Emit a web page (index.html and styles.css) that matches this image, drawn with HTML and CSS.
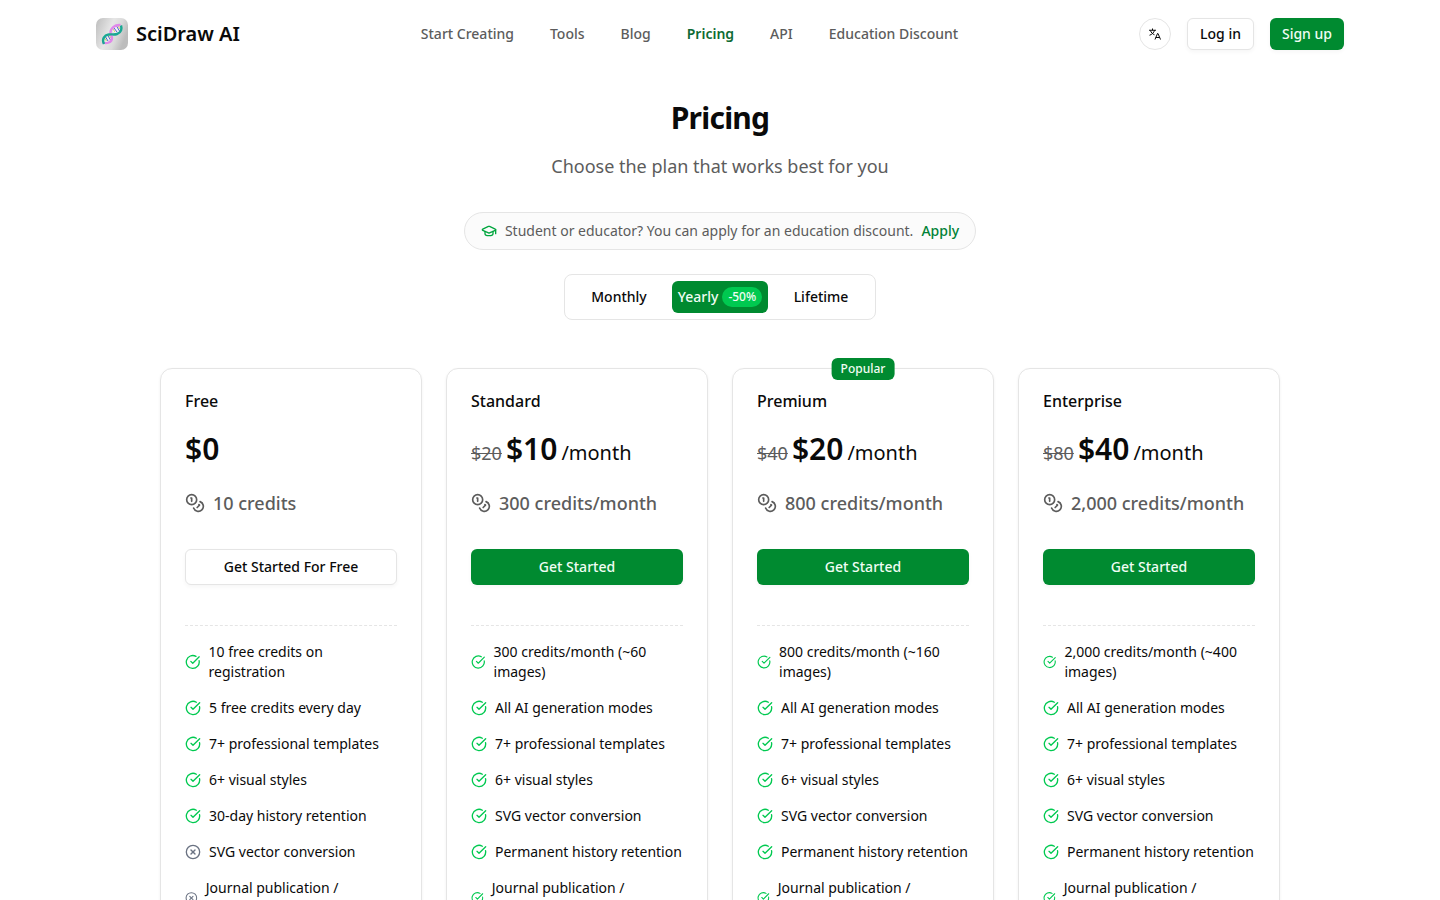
FILE: index.html
```html
<!DOCTYPE html>
<html lang="en">
<head>
  <meta charset="UTF-8" />
  <meta name="viewport" content="width=device-width, initial-scale=1.0"/>
  <title>Pricing - SciDraw AI</title>
  <link rel="stylesheet" href="styles.css">
</head>
<body>
  <!-- shared icons -->
  <svg class="sprite" aria-hidden="true">
    <symbol id="icon-check" viewBox="0 0 24 24">
      <path d="M21.801 10A10 10 0 1 1 17 3.335"/>
      <path d="m9 11 3 3L22 4"/>
    </symbol>
    <symbol id="icon-x" viewBox="0 0 24 24">
      <circle cx="12" cy="12" r="10"/>
      <path d="m15 9-6 6"/>
      <path d="m9 9 6 6"/>
    </symbol>
    <symbol id="icon-coins" viewBox="0 0 24 24">
      <circle cx="8" cy="8" r="6"/>
      <path d="M18.09 10.37A6 6 0 1 1 10.34 18"/>
      <path d="M7 6h1v4"/>
      <path d="m16.71 13.88.7.71-2.82 2.82"/>
    </symbol>
    <symbol id="icon-cap" viewBox="0 0 24 24">
      <path d="M21.42 10.922a1 1 0 0 0-.019-1.838L12.83 5.18a2 2 0 0 0-1.66 0L2.6 9.08a1 1 0 0 0 0 1.832l8.57 3.908a2 2 0 0 0 1.66 0z"/>
      <path d="M22 10v6"/>
      <path d="M6 12.5V16a6 3 0 0 0 12 0v-3.5"/>
    </symbol>
  </svg>

  <header class="header">
    <a href="#" class="logo">
      <svg class="logo-icon" viewBox="0 0 32 32" fill="none" aria-hidden="true">
        <defs>
          <linearGradient id="logo-bg" x1="0" y1="0" x2="1" y2="0.4">
            <stop offset="0" stop-color="#bdbdbd"/>
            <stop offset="0.5" stop-color="#e6e6e6"/>
            <stop offset="0.75" stop-color="#dadada"/>
            <stop offset="1" stop-color="#bcbcbc"/>
          </linearGradient>
        </defs>
        <rect width="32" height="32" rx="7" fill="url(#logo-bg)"/>
        <ellipse cx="11.5" cy="20" rx="4" ry="3.5" fill="#eef3ee"/>
        <ellipse cx="20.5" cy="11.5" rx="4" ry="3.5" fill="#f4f0fa"/>
        <path d="M9 18l3 5M11.500 17l3 5M18 10l3 4M20.500 8l3 5" stroke="#4a62cf"/>
        <path d="M8.500 20l2 3M13 17l2 3M17 11l2 3M22 8l2 3" stroke="#cfd65a"/>
        <path d="M6.500 24.500c4 1.500 9.500 0 9.500-4.500 0-2-1.500-3-1.500-5.500 0-4 4-8 10-7.500" stroke="#e088ea" stroke-width="2.400"/>
        <path d="M8 26c-2.500-5 .5-9 4.500-9.500 3-.500 5.500.500 8.500-.500 4.500-1.500 5-5.500 4-8.500" stroke="#1aa893" stroke-width="2.400"/>
      </svg>
      <span>SciDraw AI</span>
    </a>
    <nav class="nav">
      <a href="#">Start Creating</a>
      <a href="#">Tools</a>
      <a href="#">Blog</a>
      <a href="#" class="active">Pricing</a>
      <a href="#">API</a>
      <a href="#">Education Discount</a>
    </nav>
    <div class="header-actions">
      <button type="button" class="lang-btn" aria-label="Language">
        <svg viewBox="0 0 24 24" fill="none" stroke="currentColor" stroke-width="2" aria-hidden="true">
          <path d="M0 4.500h14M7 1v3.500M11 4.500C10 9 6 13 1 14.500M3 5c1 4 4 7 8 8.500"/>
          <path d="M12 23l5-12h1l5 12M13.500 19h8"/>
        </svg>
      </button>
      <button type="button" class="btn btn-outline btn-sm">Log in</button>
      <button type="button" class="btn btn-primary btn-sm">Sign up</button>
    </div>
  </header>

  <main class="main">
    <h1>Pricing</h1>
    <p class="subtitle">Choose the plan that works best for you</p>

    <div class="edu-banner">
      <svg class="icon" aria-hidden="true"><use href="#icon-cap"/></svg>
      <span>Student or educator? You can apply for an education discount.</span>
      <a href="#">Apply</a>
    </div>

    <div class="period" role="group" aria-label="Billing period">
      <button type="button">Monthly</button>
      <button type="button" class="selected">Yearly <span class="discount">-50%</span></button>
      <button type="button">Lifetime</button>
    </div>

    <div class="plans">
      <section class="plan">
        <h2>Free</h2>
        <p class="price"><strong>$0</strong></p>
        <p class="credits"><svg class="icon" aria-hidden="true"><use href="#icon-coins"/></svg>10 credits</p>
        <button type="button" class="btn btn-outline">Get Started For Free</button>
        <ul class="features">
          <li><svg class="icon" aria-hidden="true"><use href="#icon-check"/></svg><span>10 free credits on registration</span></li>
          <li><svg class="icon" aria-hidden="true"><use href="#icon-check"/></svg><span>5 free credits every day</span></li>
          <li><svg class="icon" aria-hidden="true"><use href="#icon-check"/></svg><span>7+ professional templates</span></li>
          <li><svg class="icon" aria-hidden="true"><use href="#icon-check"/></svg><span>6+ visual styles</span></li>
          <li><svg class="icon" aria-hidden="true"><use href="#icon-check"/></svg><span>30-day history retention</span></li>
          <li class="off"><svg class="icon" aria-hidden="true"><use href="#icon-x"/></svg><span>SVG vector conversion</span></li>
          <li class="off"><svg class="icon" aria-hidden="true"><use href="#icon-x"/></svg><span>Journal publication / commercial use</span></li>
        </ul>
      </section>

      <section class="plan">
        <h2>Standard</h2>
        <p class="price"><s>$20</s><strong>$10</strong><span>/month</span></p>
        <p class="credits"><svg class="icon" aria-hidden="true"><use href="#icon-coins"/></svg>300 credits/month</p>
        <button type="button" class="btn btn-primary">Get Started</button>
        <ul class="features">
          <li><svg class="icon" aria-hidden="true"><use href="#icon-check"/></svg><span>300 credits/month (~60 images)</span></li>
          <li><svg class="icon" aria-hidden="true"><use href="#icon-check"/></svg><span>All AI generation modes</span></li>
          <li><svg class="icon" aria-hidden="true"><use href="#icon-check"/></svg><span>7+ professional templates</span></li>
          <li><svg class="icon" aria-hidden="true"><use href="#icon-check"/></svg><span>6+ visual styles</span></li>
          <li><svg class="icon" aria-hidden="true"><use href="#icon-check"/></svg><span>SVG vector conversion</span></li>
          <li><svg class="icon" aria-hidden="true"><use href="#icon-check"/></svg><span>Permanent history retention</span></li>
          <li><svg class="icon" aria-hidden="true"><use href="#icon-check"/></svg><span>Journal publication / commercial use</span></li>
        </ul>
      </section>

      <section class="plan">
        <span class="popular">Popular</span>
        <h2>Premium</h2>
        <p class="price"><s>$40</s><strong>$20</strong><span>/month</span></p>
        <p class="credits"><svg class="icon" aria-hidden="true"><use href="#icon-coins"/></svg>800 credits/month</p>
        <button type="button" class="btn btn-primary">Get Started</button>
        <ul class="features">
          <li><svg class="icon" aria-hidden="true"><use href="#icon-check"/></svg><span>800 credits/month (~160 images)</span></li>
          <li><svg class="icon" aria-hidden="true"><use href="#icon-check"/></svg><span>All AI generation modes</span></li>
          <li><svg class="icon" aria-hidden="true"><use href="#icon-check"/></svg><span>7+ professional templates</span></li>
          <li><svg class="icon" aria-hidden="true"><use href="#icon-check"/></svg><span>6+ visual styles</span></li>
          <li><svg class="icon" aria-hidden="true"><use href="#icon-check"/></svg><span>SVG vector conversion</span></li>
          <li><svg class="icon" aria-hidden="true"><use href="#icon-check"/></svg><span>Permanent history retention</span></li>
          <li><svg class="icon" aria-hidden="true"><use href="#icon-check"/></svg><span>Journal publication / commercial use</span></li>
        </ul>
      </section>

      <section class="plan">
        <h2>Enterprise</h2>
        <p class="price"><s>$80</s><strong>$40</strong><span>/month</span></p>
        <p class="credits"><svg class="icon" aria-hidden="true"><use href="#icon-coins"/></svg>2,000 credits/month</p>
        <button type="button" class="btn btn-primary">Get Started</button>
        <ul class="features">
          <li><svg class="icon" aria-hidden="true"><use href="#icon-check"/></svg><span>2,000 credits/month (~400 images)</span></li>
          <li><svg class="icon" aria-hidden="true"><use href="#icon-check"/></svg><span>All AI generation modes</span></li>
          <li><svg class="icon" aria-hidden="true"><use href="#icon-check"/></svg><span>7+ professional templates</span></li>
          <li><svg class="icon" aria-hidden="true"><use href="#icon-check"/></svg><span>6+ visual styles</span></li>
          <li><svg class="icon" aria-hidden="true"><use href="#icon-check"/></svg><span>SVG vector conversion</span></li>
          <li><svg class="icon" aria-hidden="true"><use href="#icon-check"/></svg><span>Permanent history retention</span></li>
          <li><svg class="icon" aria-hidden="true"><use href="#icon-check"/></svg><span>Journal publication / commercial use</span></li>
        </ul>
      </section>
    </div>
  </main>
</body>
</html>
```
FILE: styles.css
```css
* {
  box-sizing: border-box;
}

body {
  margin: 0;
  font-family: "Noto Sans", sans-serif;
  font-size: 14px;
  line-height: 20px;
  color: #0a0a0a;
  background: #fff;
  -webkit-font-smoothing: antialiased;
}

h1, h2, p, ul {
  margin: 0;
  padding: 0;
}

a {
  color: inherit;
  text-decoration: none;
}

button {
  font: inherit;
  font-weight: 500;
  color: inherit;
  cursor: pointer;
}

.sprite {
  display: none;
}

.icon {
  width: 16px;
  height: 16px;
  fill: none;
  stroke: currentColor;
  stroke-width: 2;
  stroke-linecap: round;
  stroke-linejoin: round;
}

/* header */
.header {
  display: flex;
  align-items: center;
  justify-content: space-between;
  max-width: 1280px;
  margin: 0 auto;
  padding: 18px 16px;
}

.logo {
  display: flex;
  align-items: center;
  gap: 8px;
  font-size: 20px;
  line-height: 28px;
  font-weight: 600;
}

.logo-icon {
  width: 32px;
  height: 32px;
}

.nav {
  display: flex;
  gap: 36px;
  font-weight: 500;
  color: #5c5c5c;
}

.nav .active {
  color: #0d6b33;
  font-weight: 600;
}

.header-actions {
  display: flex;
  align-items: center;
  gap: 16px;
}

.lang-btn {
  display: flex;
  align-items: center;
  justify-content: center;
  width: 32px;
  height: 32px;
  padding: 0;
  background: #fff;
  border: 1px solid #e5e5e5;
  border-radius: 50%;
}

.lang-btn svg {
  width: 12px;
  height: 12px;
}

.btn {
  height: 36px;
  padding: 0 12px;
  border: 1px solid transparent;
  border-radius: 6px;
  box-shadow: 0 2px 4px rgba(0, 0, 0, 0.04);
}

.btn-sm {
  height: 32px;
}

.btn-outline {
  background: #fff;
  border-color: #e5e5e5;
}

.btn-primary {
  background: #008a30;
  border: none;
  color: #f0fdf4;
}

.btn-primary:hover {
  background: #007a2a;
}

/* page */
.main {
  display: flex;
  flex-direction: column;
  align-items: center;
  max-width: 1152px;
  margin: 0 auto;
  padding: 32px 16px 64px;
}

h1 {
  font-size: 30px;
  line-height: 36px;
  font-weight: 700;
  letter-spacing: -0.025em;
}

.subtitle {
  margin-top: 16px;
  font-size: 18px;
  line-height: 28px;
  color: #5c5c5c;
}

.edu-banner {
  display: flex;
  align-items: center;
  gap: 8px;
  margin-top: 32px;
  padding: 8px 16px;
  border: 1px solid #e5e5e5;
  border-radius: 24px;
  background: #fbfbfb;
  color: #5c5c5c;
}

.edu-banner .icon {
  color: #00a63e;
}

.edu-banner a {
  color: #008236;
  font-weight: 500;
}

.period {
  display: grid;
  grid-template-columns: repeat(3, 96px);
  gap: 5px;
  margin-top: 24px;
  padding: 6px;
  border: 1px solid #e5e5e5;
  border-radius: 8px;
}

.period button {
  display: flex;
  align-items: center;
  justify-content: center;
  gap: 4px;
  height: 32px;
  padding: 0;
  border: none;
  border-radius: 6px;
  background: none;
}

.period .selected {
  background: #008a30;
  color: #f0fdf4;
}

.discount {
  padding: 2px 6px;
  border-radius: 10px;
  background: #00c950;
  font-size: 12px;
  line-height: 16px;
}

/* plan cards */
.plans {
  display: grid;
  grid-template-columns: repeat(4, 1fr);
  gap: 24px;
  width: 100%;
  margin-top: 48px;
}

.plan {
  position: relative;
  display: flex;
  flex-direction: column;
  padding: 24px;
  border: 1px solid #e5e5e5;
  border-radius: 12px;
  box-shadow: 0 1px 3px rgba(0, 0, 0, 0.06);
}

.plan h2 {
  font-size: 16px;
  line-height: 16px;
  font-weight: 500;
}

.popular {
  position: absolute;
  top: -11px;
  left: 50%;
  transform: translateX(-50%);
  padding: 3px 9px;
  border-radius: 6px;
  background: #008a30;
  color: #f0fdf4;
  font-size: 12px;
  line-height: 16px;
  font-weight: 500;
}

.price {
  display: flex;
  align-items: baseline;
  gap: 4px;
  margin-top: 22px;
  font-size: 20px;
  line-height: 24px;
}

.price s {
  font-size: 18px;
  color: #5c5c5c;
}

.price strong {
  font-size: 30px;
  line-height: 36px;
  font-weight: 600;
}

.credits {
  display: flex;
  align-items: center;
  gap: 8px;
  margin: 22px 0 32px;
  font-size: 18px;
  line-height: 28px;
  font-weight: 500;
  color: #5c5c5c;
}

.credits .icon {
  width: 20px;
  height: 20px;
}

.features {
  display: flex;
  flex-direction: column;
  gap: 16px;
  margin-top: 40px;
  padding-top: 16px;
  border-top: 1px dashed #e5e5e5;
  list-style: none;
}

.features li {
  display: flex;
  align-items: center;
  gap: 8px;
}

.features .icon {
  color: #00c950;
}

.features .off .icon {
  color: #6a7282;
}
```
